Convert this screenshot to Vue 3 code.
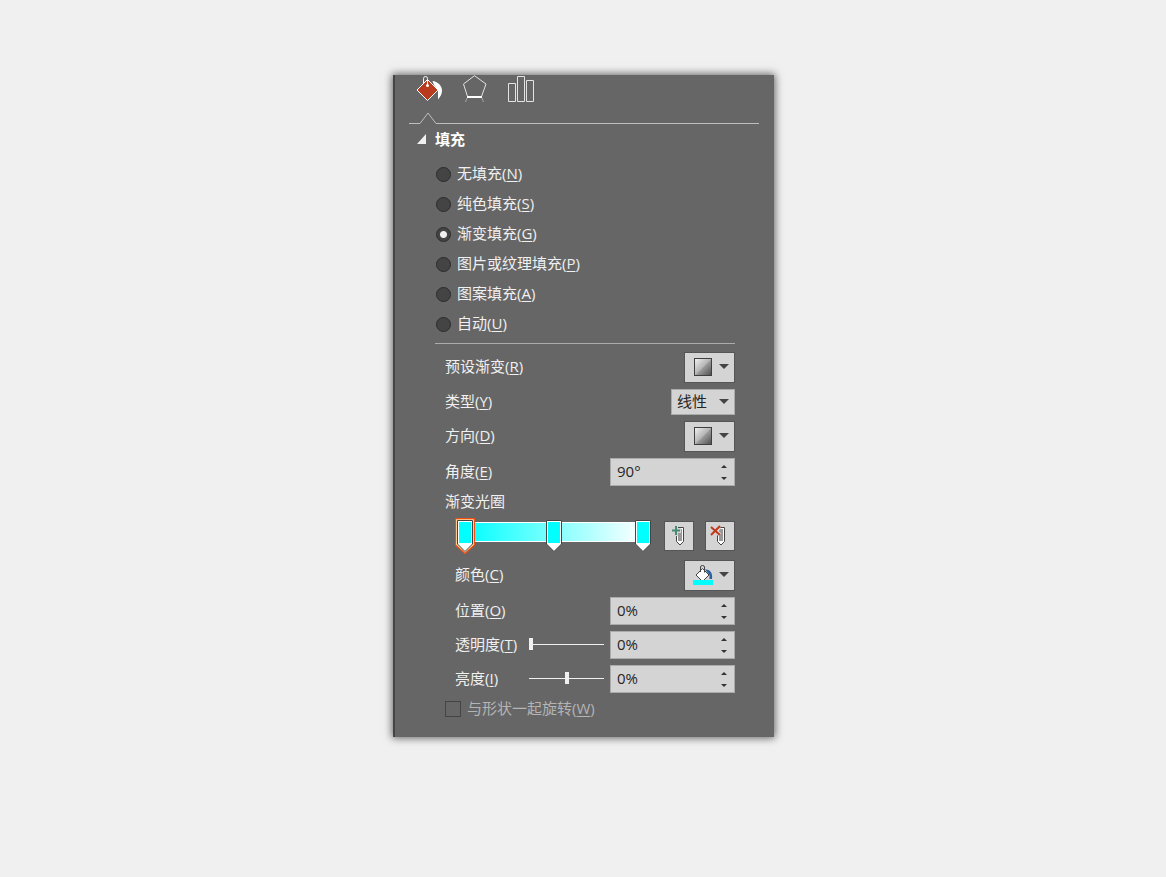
<script setup>
import { ref } from 'vue'

const fills = [
  { id: 'none', text: '无填充', key: 'N' },
  { id: 'solid', text: '纯色填充', key: 'S' },
  { id: 'gradient', text: '渐变填充', key: 'G' },
  { id: 'picture', text: '图片或纹理填充', key: 'P' },
  { id: 'pattern', text: '图案填充', key: 'A' },
  { id: 'auto', text: '自动', key: 'U' }
]
const fill = ref('gradient')
const type = ref('linear')
const angle = ref('90°')
const stops = ref([0, 50, 100])
const active = ref(0)
const position = ref('0%')
const levels = ref([
  { id: 'transparency', text: '透明度', key: 'T', value: 0, min: 0 },
  { id: 'brightness', text: '亮度', key: 'I', value: 0, min: -100 }
])
const rotate = ref(false)

function step(text, delta) {
  const unit = text.slice(-1)
  return parseInt(text, 10) + delta + unit
}
function setLevel(level, value) {
  level.value = Math.min(100, Math.max(level.min, value))
}
</script>

<template>
  <main class="page">
    <section class="panel" aria-label="设置格式">
      <div class="tabs" role="tablist">
        <button class="tab" type="button" role="tab" aria-selected="true" aria-label="填充与线条">
          <svg width="28" height="28" viewBox="0 0 28 28">
            <path d="M17.500 6C22.500 6.500 27 10.500 27 15.500C27 19 25.500 21.500 23 24.500V15.500L19 10Z" fill="#fff" />
            <path d="M12.500 4.500L23 15L12.500 25.500L2 15Z" fill="#b83b1d" stroke="#fff" />
            <path d="M8.500 8V3.500Q8.500 1.500 10.500 1.500Q12.500 1.500 12.500 3.500V10" fill="none" stroke="#f5f5f5" />
            <circle cx="12.500" cy="10.500" r="1.500" fill="#fff" />
          </svg>
        </button>
        <button class="tab" type="button" role="tab" aria-selected="false" aria-label="效果">
          <svg width="28" height="28" viewBox="0 0 28 28">
            <path d="M6.500 21.500L2.500 9L13.500 .700L25 9L20.500 21.500" fill="none" stroke="#e3e3e3" />
            <path d="M6 22H21" stroke="#fff" stroke-width="2" />
            <path d="M6 23L4.500 27M21 23L22.500 27" stroke="#a5a5a5" />
          </svg>
        </button>
        <button class="tab" type="button" role="tab" aria-selected="false" aria-label="图表选项">
          <svg width="28" height="28" viewBox="0 0 28 28">
            <path d="M1.500 8.500H8.500V26.500H1.500ZM10.500 1.500H17.500V26.500H10.500ZM19.500 5.500H26.500V26.500H19.500Z" fill="none" stroke="#e3e3e3" />
          </svg>
        </button>
      </div>
      <div class="tab-line">
        <svg class="notch" width="18" height="12" viewBox="0 0 18 12">
          <path d="M1 10.500L9 1L17 10.500V12H1Z" fill="#666" />
          <path d="M0 11.500H1L9 1L17 11.500H18" fill="none" stroke="#bebebe" />
        </svg>
      </div>

      <h2 class="heading">
        <svg width="10" height="10" viewBox="0 0 10 10"><path d="M9 0V10H0Z" fill="#f0f0f0" /></svg>
        <span>填充</span>
      </h2>

      <div class="fills" role="radiogroup" aria-label="填充">
        <label v-for="f in fills" :key="f.id" class="fill">
          <input v-model="fill" type="radio" name="fill" :value="f.id" />
          <span>{{ f.text }}(<u>{{ f.key }}</u>)</span>
        </label>
      </div>

      <div class="fields">
        <div class="row">
          <label for="preset">预设渐变(<u>R</u>)</label>
          <button id="preset" class="drop" type="button">
            <svg width="18" height="18" viewBox="0 0 18 18">
              <defs>
                <linearGradient id="g1" x1="0" y1="0" x2="1" y2="1">
                  <stop offset="0" stop-color="#f4f4f4" /><stop offset=".5" stop-color="#b4b4b4" />
                  <stop offset=".5" stop-color="#a0a0a0" /><stop offset="1" stop-color="#4c4c4c" />
                </linearGradient>
              </defs>
              <rect x=".5" y=".5" width="17" height="17" fill="url(#g1)" stroke="#3f3f3f" />
            </svg>
            <i class="arrow"></i>
          </button>
        </div>
        <div class="row">
          <label for="type">类型(<u>Y</u>)</label>
          <span class="select">
            <select id="type" v-model="type">
              <option value="linear">线性</option>
            </select>
            <i class="arrow"></i>
          </span>
        </div>
        <div class="row">
          <label for="direction">方向(<u>D</u>)</label>
          <button id="direction" class="drop" type="button">
            <svg width="18" height="18" viewBox="0 0 18 18">
              <rect x=".5" y=".5" width="17" height="17" fill="url(#g1)" stroke="#3f3f3f" />
            </svg>
            <i class="arrow"></i>
          </button>
        </div>
        <div class="row">
          <label for="angle">角度(<u>E</u>)</label>
          <span class="spin">
            <input id="angle" v-model="angle" type="text" />
            <span class="steps">
              <button type="button" aria-label="增加角度" @click="angle = step(angle, 10)"><i class="up"></i></button>
              <button type="button" aria-label="减少角度" @click="angle = step(angle, -10)"><i class="down"></i></button>
            </span>
          </span>
        </div>

        <div class="caption">渐变光圈</div>
        <div class="row gradient">
          <div class="ramp" role="group" aria-label="渐变光圈">
            <button
              v-for="(s, i) in stops"
              :key="i"
              class="stop"
              type="button"
              :aria-label="'光圈 ' + s + '%'"
              :style="{ left: s + '%' }"
              @click="active = i"
            >
              <svg width="20" height="36" viewBox="0 0 20 36">
                <path v-if="active === i" d="M.500 .500H19.500V27L10 35.500L.500 27Z" fill="#ffe3a8" stroke="#f04e12" stroke-width="1.300" />
                <path d="M2.500 2.500H17.500V26L10 33.500L2.500 26Z" fill="#fff" stroke="#444" />
                <rect x="4" y="4" width="12" height="21" fill="#0ff" />
              </svg>
            </button>
          </div>
          <div class="tools">
            <button class="tool" type="button" aria-label="添加渐变光圈">
              <svg width="28" height="28" viewBox="0 0 28 28">
                <path d="M11.500 5.500H18.500V19.500L15 23L11.500 19.500Z" fill="#fff" stroke="#444" />
                <rect x="13" y="7" width="4" height="12" fill="#999" />
                <path d="M9 3H13V6H16V11H13V14H9V11H6V6H9Z" fill="#d4d4d4" />
                <path d="M11 4V13M7 8.500H15" stroke="#488a75" stroke-width="2" />
              </svg>
            </button>
            <button class="tool" type="button" aria-label="删除渐变光圈">
              <svg width="28" height="28" viewBox="0 0 28 28">
                <path d="M11.500 5.500H18.500V19.500L15 23L11.500 19.500Z" fill="#fff" stroke="#444" />
                <rect x="13" y="7" width="4" height="12" fill="#999" />
                <path d="M5 5L14 13M14 5L5 13" stroke="#d4d4d4" stroke-width="4" />
                <path d="M5 5L14 13M14 4L5 13" stroke="#c03a1e" stroke-width="2" />
              </svg>
            </button>
          </div>
        </div>

        <div class="row sub">
          <label for="color">颜色(<u>C</u>)</label>
          <button id="color" class="drop swatch" type="button">
            <svg width="20" height="22" viewBox="0 0 20 22">
              <path d="M12 5.500C17 5 20 9 19 15H16.500V11Z" fill="#2b5f9e" />
              <path d="M9.500 4.500L16 11L9.500 17.500L3 11Z" fill="#fff" stroke="#444" />
              <path d="M7.500 8V3Q7.500 1.500 9.500 1.500Q11.500 1.500 11.500 3V8.500" fill="none" stroke="#444" />
              <rect y="16" width="20" height="5" fill="#0ff" />
            </svg>
            <i class="arrow"></i>
          </button>
        </div>
        <div class="row sub">
          <label for="position">位置(<u>O</u>)</label>
          <span class="spin">
            <input id="position" v-model="position" type="text" />
            <span class="steps">
              <button type="button" aria-label="增加位置" @click="position = step(position, 1)"><i class="up"></i></button>
              <button type="button" aria-label="减少位置" @click="position = step(position, -1)"><i class="down"></i></button>
            </span>
          </span>
        </div>
        <div v-for="l in levels" :key="l.id" class="row sub">
          <label :for="l.id">{{ l.text }}(<u>{{ l.key }}</u>)</label>
          <input v-model.number="l.value" class="range" type="range" :min="l.min" max="100" :aria-label="l.text" />
          <span class="spin">
            <input :id="l.id" type="text" :value="l.value + '%'" @change="setLevel(l, parseInt($event.target.value, 10) || 0)" />
            <span class="steps">
              <button type="button" :aria-label="'增加' + l.text" @click="setLevel(l, l.value + 1)"><i class="up"></i></button>
              <button type="button" :aria-label="'减少' + l.text" @click="setLevel(l, l.value - 1)"><i class="down"></i></button>
            </span>
          </span>
        </div>
        <label class="check">
          <input v-model="rotate" type="checkbox" disabled />
          <span>与形状一起旋转(<u>W</u>)</span>
        </label>
      </div>
    </section>
  </main>
</template>

<style>
body {
  margin: 0;
  background: #f0f0f0;
}
</style>

<style scoped>
.page {
  display: flex;
  justify-content: center;
  padding: 75px 0 75px 1px;
  color: #f0f0f0;
  font: 15px/20px "Open Sans", "Noto Sans CJK SC", sans-serif;
}
.page *,
.page *::before {
  box-sizing: border-box;
}
button,
input,
select {
  margin: 0;
  padding: 0;
  border: 0;
  border-radius: 0;
  font: inherit;
}
svg {
  display: block;
  flex: none;
}
u {
  text-decoration-thickness: 1px;
  text-underline-offset: 2px;
}
.panel {
  width: 100%;
  max-width: 381px;
  padding: 0 15px 18px 14px;
  border-left: 2px solid #444;
  background: #666;
  box-shadow: 0 0 8px 1px rgba(0, 0, 0, 0.6);
}
.tabs {
  display: flex;
  gap: 18px;
  height: 48px;
  padding-left: 6px;
}
.tab {
  width: 28px;
  height: 28px;
  background: none;
}
.tab-line {
  position: relative;
  height: 1px;
  background: #bebebe;
}
.notch {
  position: absolute;
  left: 10px;
  bottom: 0;
}
.heading {
  display: flex;
  align-items: center;
  gap: 8px;
  height: 30px;
  margin: 0 0 5px;
  padding-left: 8px;
  font-size: 15px;
  font-weight: 700;
  color: #fff;
}
.fills {
  margin: 0 24px 8px 26px;
  padding-bottom: 4px;
  border-bottom: 1px solid #ababab;
}
.fill {
  display: flex;
  align-items: center;
  gap: 6px;
  height: 30px;
  padding-left: 1px;
}
.fill span,
.check span {
  padding-bottom: 2px;
}
.fill input {
  appearance: none;
  width: 15px;
  height: 15px;
  border: 1px solid #2b2b2b;
  border-radius: 50%;
  background: #444;
}
.fill input:checked {
  background: radial-gradient(circle, #f0f0f0 3px, #444 4px);
}
.fields {
  display: flex;
  flex-direction: column;
  gap: 6px;
  padding: 0 24px 0 36px;
}
.row {
  display: flex;
  align-items: center;
  justify-content: space-between;
}
.row label {
  padding-bottom: 3px;
}
.caption {
  height: 20px;
  line-height: 18px;
}
.sub {
  padding-left: 10px;
}
.drop {
  display: flex;
  align-items: center;
  justify-content: flex-end;
  gap: 7px;
  width: 51px;
  height: 31px;
  padding: 0 5px 2px 0;
  border: 1px solid #555;
  background: #d4d4d4;
}
.swatch {
  gap: 6px;
}
.arrow {
  border: 5px solid transparent;
  border-top-color: #444;
  border-bottom: 0;
}
.select {
  position: relative;
  width: 64px;
  height: 26px;
}
.select select {
  appearance: none;
  width: 100%;
  height: 100%;
  padding: 0 0 2px 5px;
  border: 1px solid #ababab;
  background: #d4d4d4;
  color: #262626;
}
.select .arrow {
  position: absolute;
  right: 6px;
  top: 10px;
  pointer-events: none;
}
.spin {
  display: flex;
  width: 125px;
  height: 28px;
  border: 1px solid #ababab;
  background: #d4d4d4;
}
.spin input {
  flex: 1;
  min-width: 0;
  padding: 0 0 2px 6px;
  background: none;
  color: #262626;
}
.steps {
  display: flex;
  flex-direction: column;
  width: 20px;
  padding-top: 1px;
}
.steps button {
  display: flex;
  flex: 1;
  align-items: center;
  justify-content: center;
  background: none;
}
.up,
.down {
  border: 3px solid transparent;
}
.up {
  border-top: 0;
  border-bottom-color: #333;
}
.down {
  border-bottom: 0;
  border-top-color: #333;
}
.gradient {
  height: 36px;
  padding-left: 20px;
}
.ramp {
  position: relative;
  flex: 1;
  height: 20px;
  margin: 0 21px 8px 0;
  border: 1px solid #fff;
  border-width: 1px 0;
  background: linear-gradient(90deg, #0ff, #fff);
}
.stop {
  position: absolute;
  top: -5px;
  width: 20px;
  height: 36px;
  margin-left: -10px;
  background: none;
}
.tools {
  display: flex;
  gap: 11px;
}
.tool {
  width: 30px;
  height: 30px;
  border: 1px solid #555;
  background: #d4d4d4;
}
.range {
  appearance: none;
  width: 75px;
  height: 12px;
  margin: 0 6px 2px auto;
  background: linear-gradient(#f0f0f0, #f0f0f0) center / 100% 1px no-repeat;
}
.range::-webkit-slider-thumb {
  appearance: none;
  width: 4px;
  height: 12px;
  background: #f0f0f0;
}
.check {
  display: flex;
  align-items: center;
  gap: 6px;
  height: 20px;
  color: #b4b4b4;
}
.check input {
  appearance: none;
  width: 16px;
  height: 16px;
  border: 1px solid #444;
}
</style>
